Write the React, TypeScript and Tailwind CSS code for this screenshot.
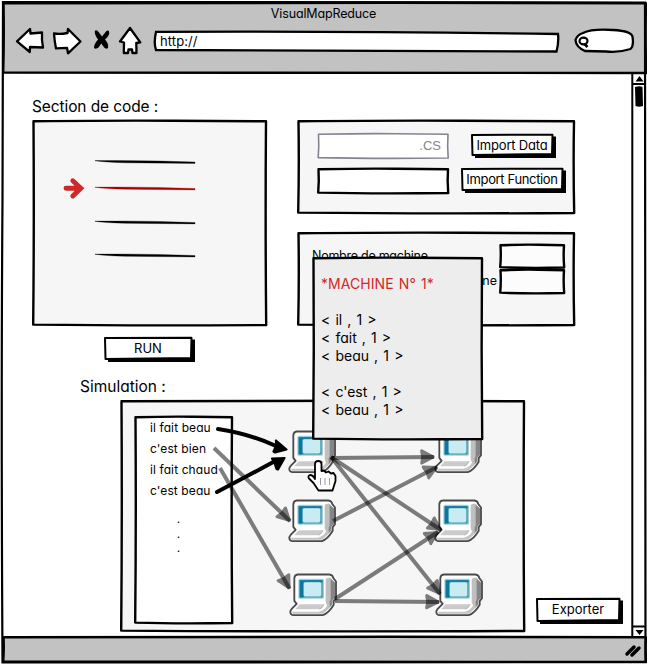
import type { ReactNode } from 'react';

type FrameProps = {
  w: number;
  h: number;
  fill?: string;
  stroke?: string;
  sw?: number;
};

/* Hand-drawn rectangle used behind panels, inputs and buttons. */
function Frame({ w, h, fill = '#f6f6f6', stroke = '#000', sw = 2.4 }: FrameProps) {
  const d = `M1.500 1.200 Q${w * 0.4} 0.4 ${w * 0.6} 0.800 T${w - 1} 1.300 Q${w - 1.8} ${h * 0.5} ${w - 0.8} ${h - 1} Q${w * 0.45} ${h} 1.200 ${h - 1.400} Q2.200 ${h * 0.5} 1.500 1.200Z`;
  return (
    <svg className="pointer-events-none absolute inset-0 overflow-visible" width={w} height={h} aria-hidden="true">
      <path d={d} fill={fill} stroke={stroke} strokeWidth={sw} strokeLinejoin="round" />
    </svg>
  );
}

function SketchButton({ w, h, children }: { w: number; h: number; children: ReactNode }) {
  return (
    <>
      <svg className="pointer-events-none absolute inset-0 overflow-visible" width={w} height={h} aria-hidden="true">
        <path d={`M4 3 L${w} 2.500 V${h} L4 ${h}Z`} fill="#000" />
        <path d={`M1 1 L${w - 3.5} 0.700 L${w - 4} ${h - 4} L1.500 ${h - 3}Z`} fill="#fff" stroke="#000" strokeWidth="2" strokeLinejoin="round" />
      </svg>
      <span className="relative">{children}</span>
    </>
  );
}

function NavIcons() {
  return (
    <svg width="132" height="36" viewBox="12 20 132 36" aria-hidden="true">
      <g fill="#fff" stroke="#000" strokeWidth="2.300" strokeLinejoin="round">
        <path d="M17 37.300 L30 25 L30.500 29.500 L42 28.500 Q41.500 36 43 43.500 L30 43 L29.800 48 Z" />
        <path d="M54 29.500 Q60 30.500 67.500 29 L68 25 L80.500 37.500 L68 49.300 L67 43.800 L56 44.400 Q54.500 37 54 29.500Z" />
        <path d="M130 24 L120 37.500 L124 38.500 L123.800 49 L128 49 L128.500 45.500 L132 45.500 L132.500 49 L136.500 49 L136.300 39 L140.300 38.300 Z" />
      </g>
      <path d="M94.800 27 Q96.500 25 99 28.500 L102 32.500 L106 27.500 Q109 25 109.300 29 Q109 32 105 35.500 Q109 40 108 44 Q105.500 46 103 42 L101.300 39.500 L98.500 43.500 Q96 45.500 94 44 Q94 40 98 35.500 Q94.500 31 94.800 27Z" fill="#000" />
    </svg>
  );
}

function Computer({ x, y }: { x: number; y: number }) {
  return (
    <g transform={`translate(${x} ${y}) scale(0.3333)`} strokeLinejoin="round">
      <path d="M23 3 H118 Q128 4 130 14 L138 24 V74 L131 83 V94 Q116 120 98 125 H10 Q0 124 1 113 L5 106 L20 91 L13 82 V14 Q14 4 23 3Z" fill="#fff" stroke="#4a4a4a" strokeWidth="5.500" />
      <path d="M107 18 Q109 12 120 12 Q124 13 126 20 L134 27 V73 L127 81 V92 Q118 106 107 113 L111 95 L107 87Z" fill="#bfbfbf" />
      <path d="M122 16 L135 27 V73 L127 81 V92 L119 101 V84 L122 78Z" fill="#858585" />
      <path d="M5 115 H86 Q100 112 110 99 L120 92 Q110 115 97 121 H9Z" fill="#c4c4c4" />
      <path d="M29 92 H102 Q98 104 88 107 H15Z" fill="#cbcbcb" />
      <path d="M102 92 Q98 104 88 107" stroke="#aaa" strokeWidth="2.500" fill="none" />
      <rect x="25" y="16" width="77" height="60" rx="5" fill="#a3ced8" />
      <path d="M29 20 H98 V72 H29Z" fill="#3f94ae" />
      <path d="M29 20 H98 V25 H40 V72 H29Z" fill="#08789f" />
      <rect x="41" y="26" width="53" height="43" rx="5" fill="#c9ebf2" />
    </g>
  );
}

type Link = { from: [number, number]; to: [number, number] };

function Arrow({ from, to }: Link) {
  const angle = (Math.atan2(to[1] - from[1], to[0] - from[0]) * 180) / Math.PI;
  return (
    <g>
      <path d={`M${from[0]} ${from[1]} L${to[0]} ${to[1]}`} stroke="#000" strokeOpacity="0.5" strokeWidth="4" />
      <path d="M0.500 -1 L-12 -7.800 Q-14.500 -8 -13.500 -4 Q-12 0 -13.500 4 Q-14.500 8 -12 7.300 L0.500 1Z" fill="#000" fillOpacity="0.5" transform={`translate(${to[0]} ${to[1]}) rotate(${angle})`} />
    </g>
  );
}

const links: Link[] = [
  { from: [214, 448], to: [290, 521] },
  { from: [220, 468], to: [289.5, 588.5] },
  { from: [331, 458], to: [434, 457] },
  { from: [331, 457], to: [441, 530] },
  { from: [331, 457], to: [440, 594] },
  { from: [333, 521], to: [437, 467] },
  { from: [335, 599], to: [438, 532] },
  { from: [335, 601], to: [439, 602] },
];

function Diagram() {
  return (
    <svg className="pointer-events-none absolute inset-0" width="405" height="232" viewBox="120 400 405 232" aria-hidden="true">
      <Computer x={289} y={430.5} />
      <Computer x={289} y={499.5} />
      <Computer x={290} y={573.5} />
      <Computer x={435} y={430.5} />
      <Computer x={435} y={499.5} />
      <Computer x={436} y={573.5} />
      {links.map((l, i) => (
        <Arrow key={i} from={l.from} to={l.to} />
      ))}
      <g stroke="#000" strokeWidth="4" strokeLinecap="round" fill="none">
        <path d="M218 429 Q250 434 276 446" />
        <path d="M217 492 Q242 479 277 460" />
      </g>
      <path d="M286.500 449.500 L276 440.500 L276 446 L273.500 451.500 L275 452.500Z" stroke="#000" strokeWidth="2.200" strokeLinejoin="round" />
      <path d="M284.500 458 L272 458.500 L274.500 463 L276.500 469 L278 469.500Z" stroke="#000" strokeWidth="2.200" strokeLinejoin="round" />
    </svg>
  );
}

function HandCursor() {
  return (
    <svg className="absolute left-[186px] top-[59px]" width="32" height="34" viewBox="306 460 32 34" aria-hidden="true">
      <path d="M315 480 V465 Q315 462 318.300 462 Q321.500 462 321.500 465 V472 L324 471.500 L326 473.500 L328.500 472.500 L331 474.500 L333.500 474 L335.500 477 V482 L332.500 491.500 H318.500 L313.500 484 L309 479.500 Q307.500 477 310 476 Q313 476 315 480Z" fill="#fff" stroke="#000" strokeWidth="1.800" strokeLinejoin="round" />
      <path d="M320.500 479 V486 M325 479 V486 M329.500 479 V486" stroke="#8f8f9c" strokeWidth="0.900" />
    </svg>
  );
}

function CodeLines() {
  const rows: [number, string][] = [
    [161, '#000'],
    [187.5, '#a80000'],
    [221.5, '#000'],
    [254.5, '#000'],
  ];
  return (
    <svg className="relative" width="235" height="206" viewBox="32 120 235 206" aria-hidden="true">
      {rows.map(([y, c]) => (
        <path key={y} d={`M95 ${y - 0.4} Q130 ${y - 0.7} 160 ${y} L195 ${y + 1} V${y + 2.4} Q150 ${y + 2} 125 ${y + 1.800} Q105 ${y + 1.200} 95 ${y - 0.2}Z`} fill={c} stroke={c} strokeWidth="0.300" />
      ))}
      <path d="M66 188.300 H79 M72.800 180.800 L80.800 188.300 L72.800 196" fill="none" stroke="#d02828" strokeWidth="4.900" strokeLinecap="round" />
    </svg>
  );
}

export default function App() {
  return (
    <div className="relative flex h-[665px] w-[647px] flex-col overflow-hidden bg-white pl-[2px] pt-[2px] font-['Inter','Liberation_Sans',sans-serif] text-[13px] text-black [font-feature-settings:'cv11']">
      <header className="relative flex h-[71px] w-[643px] shrink-0 flex-col">
        <Frame w={645} h={72} fill="#c2c2c2" />
        <h1 className="relative h-[22px] text-center text-[12.5px] leading-[23px] tracking-[-0.15px]">VisualMapReduce</h1>
        <div className="relative flex items-start pl-[10px]">
          <NavIcons />
          <div className="relative ml-[8px] mt-[7px] flex h-[21px] w-[408px] items-center pl-[8px] leading-4">
            <svg className="absolute inset-0 overflow-visible" width="408" height="21" aria-hidden="true">
              <path d="M4 0.900 Q200 0 406 3 Q407 11 404.500 20.500 L4 19 Q1.500 12 4 0.900Z" fill="#fff" stroke="#000" strokeWidth="2.300" />
            </svg>
            <span className="relative -top-px tracking-[0.1px]">http://</span>
          </div>
          <svg className="ml-[13px] mt-[3px]" width="62" height="28" viewBox="573 27 62 28" aria-hidden="true">
            <path d="M583 33 Q592 28.500 613 30 Q632 31 632.500 37 Q634 46 630.500 49 Q618 53 606 51.500 L585 51 Q576 47 575.500 40 Q577 35 583 33Z" fill="#fff" stroke="#000" strokeWidth="2.300" />
            <ellipse cx="583.500" cy="41" rx="4" ry="3.300" fill="none" stroke="#000" strokeWidth="2.200" />
            <path d="M584.500 44 L587.500 47" stroke="#000" strokeWidth="2.600" />
          </svg>
        </div>
      </header>

      <div className="relative flex h-[563px] w-[643px] shrink-0">
        <main className="w-[629px] pl-[30px]">
          <div className="flex gap-[30px]">
            <section className="w-[235px]">
              <h2 className="mt-[24px] h-[23px] whitespace-nowrap text-[15.5px] leading-5 tracking-[-0.1px]">Section de code :</h2>
              <div className="relative h-[206px]">
                <Frame w={235} h={206} />
                <CodeLines />
              </div>
              <button className="relative ml-[72px] mt-[11px] flex h-[25px] w-[91px] items-center justify-center pb-[2px] pr-[3px] text-[13px]">
                <SketchButton w={91} h={25}>RUN</SketchButton>
              </button>
            </section>

            <section className="w-[278px] pt-[47px]">
              <div className="relative flex h-[94px] flex-col gap-[9px] pl-[20px] pt-[13px]">
                <Frame w={278} h={94} />
                <div className="flex items-start justify-between pr-[19px]">
                  <div className="relative h-[26px] w-[132px] pr-[8px] text-right font-['Liberation_Sans',sans-serif] leading-[25px] text-[#85858c]">
                    <Frame w={132} h={26} fill="#fff" stroke="#85838f" sw={1.6} />
                    <span className="relative">.CS</span>
                  </div>
                  <button className="relative mt-px flex h-[24px] w-[85px] items-center justify-center whitespace-nowrap pr-[3px] tracking-[-0.2px]">
                    <SketchButton w={85} h={24}>Import Data</SketchButton>
                  </button>
                </div>
                <div className="flex items-start justify-between pr-[9px]">
                  <div className="relative h-[26px] w-[132px]">
                    <Frame w={132} h={26} fill="#fff" />
                  </div>
                  <button className="relative flex h-[25px] w-[105px] items-center justify-center whitespace-nowrap pb-[2px] pr-[3px] tracking-[-0.35px]">
                    <SketchButton w={105} h={25}>Import Function</SketchButton>
                  </button>
                </div>
              </div>
              <div className="relative mt-[18px] flex h-[94px] flex-col pl-[15px] pr-[9px] pt-[12px]">
                <Frame w={278} h={94} />
                <div className="relative flex h-[25px] justify-between">
                  <span className="pt-[2px] text-[12.5px] leading-5 tracking-[-0.26px]">Nombre de machine</span>
                  <div className="relative w-[67px]">
                    <Frame w={66} h={24.5} fill="#fcfcfc" />
                  </div>
                </div>
                <div className="relative flex h-[25px] justify-end gap-[2px]">
                  <span className="pt-[2px] text-[12.5px] leading-5">machine</span>
                  <div className="relative w-[67px]">
                    <Frame w={66} h={25} fill="#fcfcfc" />
                  </div>
                </div>
              </div>
            </section>
          </div>

          <h2 className="ml-[48px] mt-[15px] h-[23px] text-[15.5px] leading-5">Simulation :</h2>
          <div className="flex items-end gap-[11px] pl-[88px]">
            <div className="relative h-[232px] w-[405px] shrink-0 pl-[14px] pt-[16px]">
              <Frame w={405} h={232} />
              <div className="relative h-[208px] w-[99px] pl-[16px] pt-px text-[12px]">
                <Frame w={99} h={208} fill="#fff" />
                <ul className="relative whitespace-nowrap leading-[21px] tracking-[0.1px]">
                  <li>il fait beau</li>
                  <li>c'est bien</li>
                  <li>il fait chaud</li>
                  <li>c'est beau</li>
                </ul>
                <div className="relative mt-[11px] w-[57px] text-center leading-[14.5px]">
                  <p>.</p>
                  <p>.</p>
                  <p>.</p>
                </div>
              </div>
              <Diagram />
              <aside className="absolute left-[192px] top-[-143px] h-[183px] w-[171px] pl-[9px] pt-[18px] text-[14px] leading-[18px]">
                <Frame w={171} h={183} fill="#ededed" />
                <div className="relative whitespace-nowrap [word-spacing:1.2px]">
                  <p className="mb-[18px] tracking-[0.05px] text-[#d02828]">*MACHINE N° 1*</p>
                  <p>&lt; il , 1 &gt;</p>
                  <p>&lt; fait , 1 &gt;</p>
                  <p className="mb-[18px]">&lt; beau , 1 &gt;</p>
                  <p>&lt; c'est , 1 &gt;</p>
                  <p>&lt; beau , 1 &gt;</p>
                </div>
              </aside>
              <HandCursor />
            </div>
            <button className="relative mb-[8px] flex h-[26px] w-[87px] shrink-0 items-center justify-center pb-[2px] pr-[3px]">
              <SketchButton w={87} h={26}>Exporter</SketchButton>
            </button>
          </div>
        </main>
        <svg className="shrink-0 overflow-visible" width="14" height="563" viewBox="631 73 14 563" aria-hidden="true">
          <path d="M632.300 74 V636 M632 84 H645 M632 626.500 H645" stroke="#000" strokeWidth="2" />
          <path d="M639.500 76 L643.500 81.500 H635.500Z M635.500 630 H643.500 L639.500 635Z" fill="#000" />
          <path d="M635 87 Q640 85.500 642.500 87 L643 106 Q639 107.500 635.500 106Z" fill="#000" />
        </svg>
      </div>

      <footer className="relative flex h-[27px] w-[643px] shrink-0 items-center justify-end pr-[3px]">
        <Frame w={645} h={27} fill="#c2c2c2" />
        <svg className="relative" width="18" height="16" aria-hidden="true">
          <path d="M3 12 L10 5 M8 13 L15 6" stroke="#000" strokeWidth="3.500" strokeLinecap="round" />
        </svg>
      </footer>
      <svg className="pointer-events-none absolute inset-0" width="647" height="665" aria-hidden="true">
        <path d="M3 2 Q300 1 645 2.500 Q644 300 645.500 662 Q300 663 2.500 662.500 Q1 400 2.500 200Z" fill="none" stroke="#000" strokeWidth="2.200" />
      </svg>
    </div>
  );
}
